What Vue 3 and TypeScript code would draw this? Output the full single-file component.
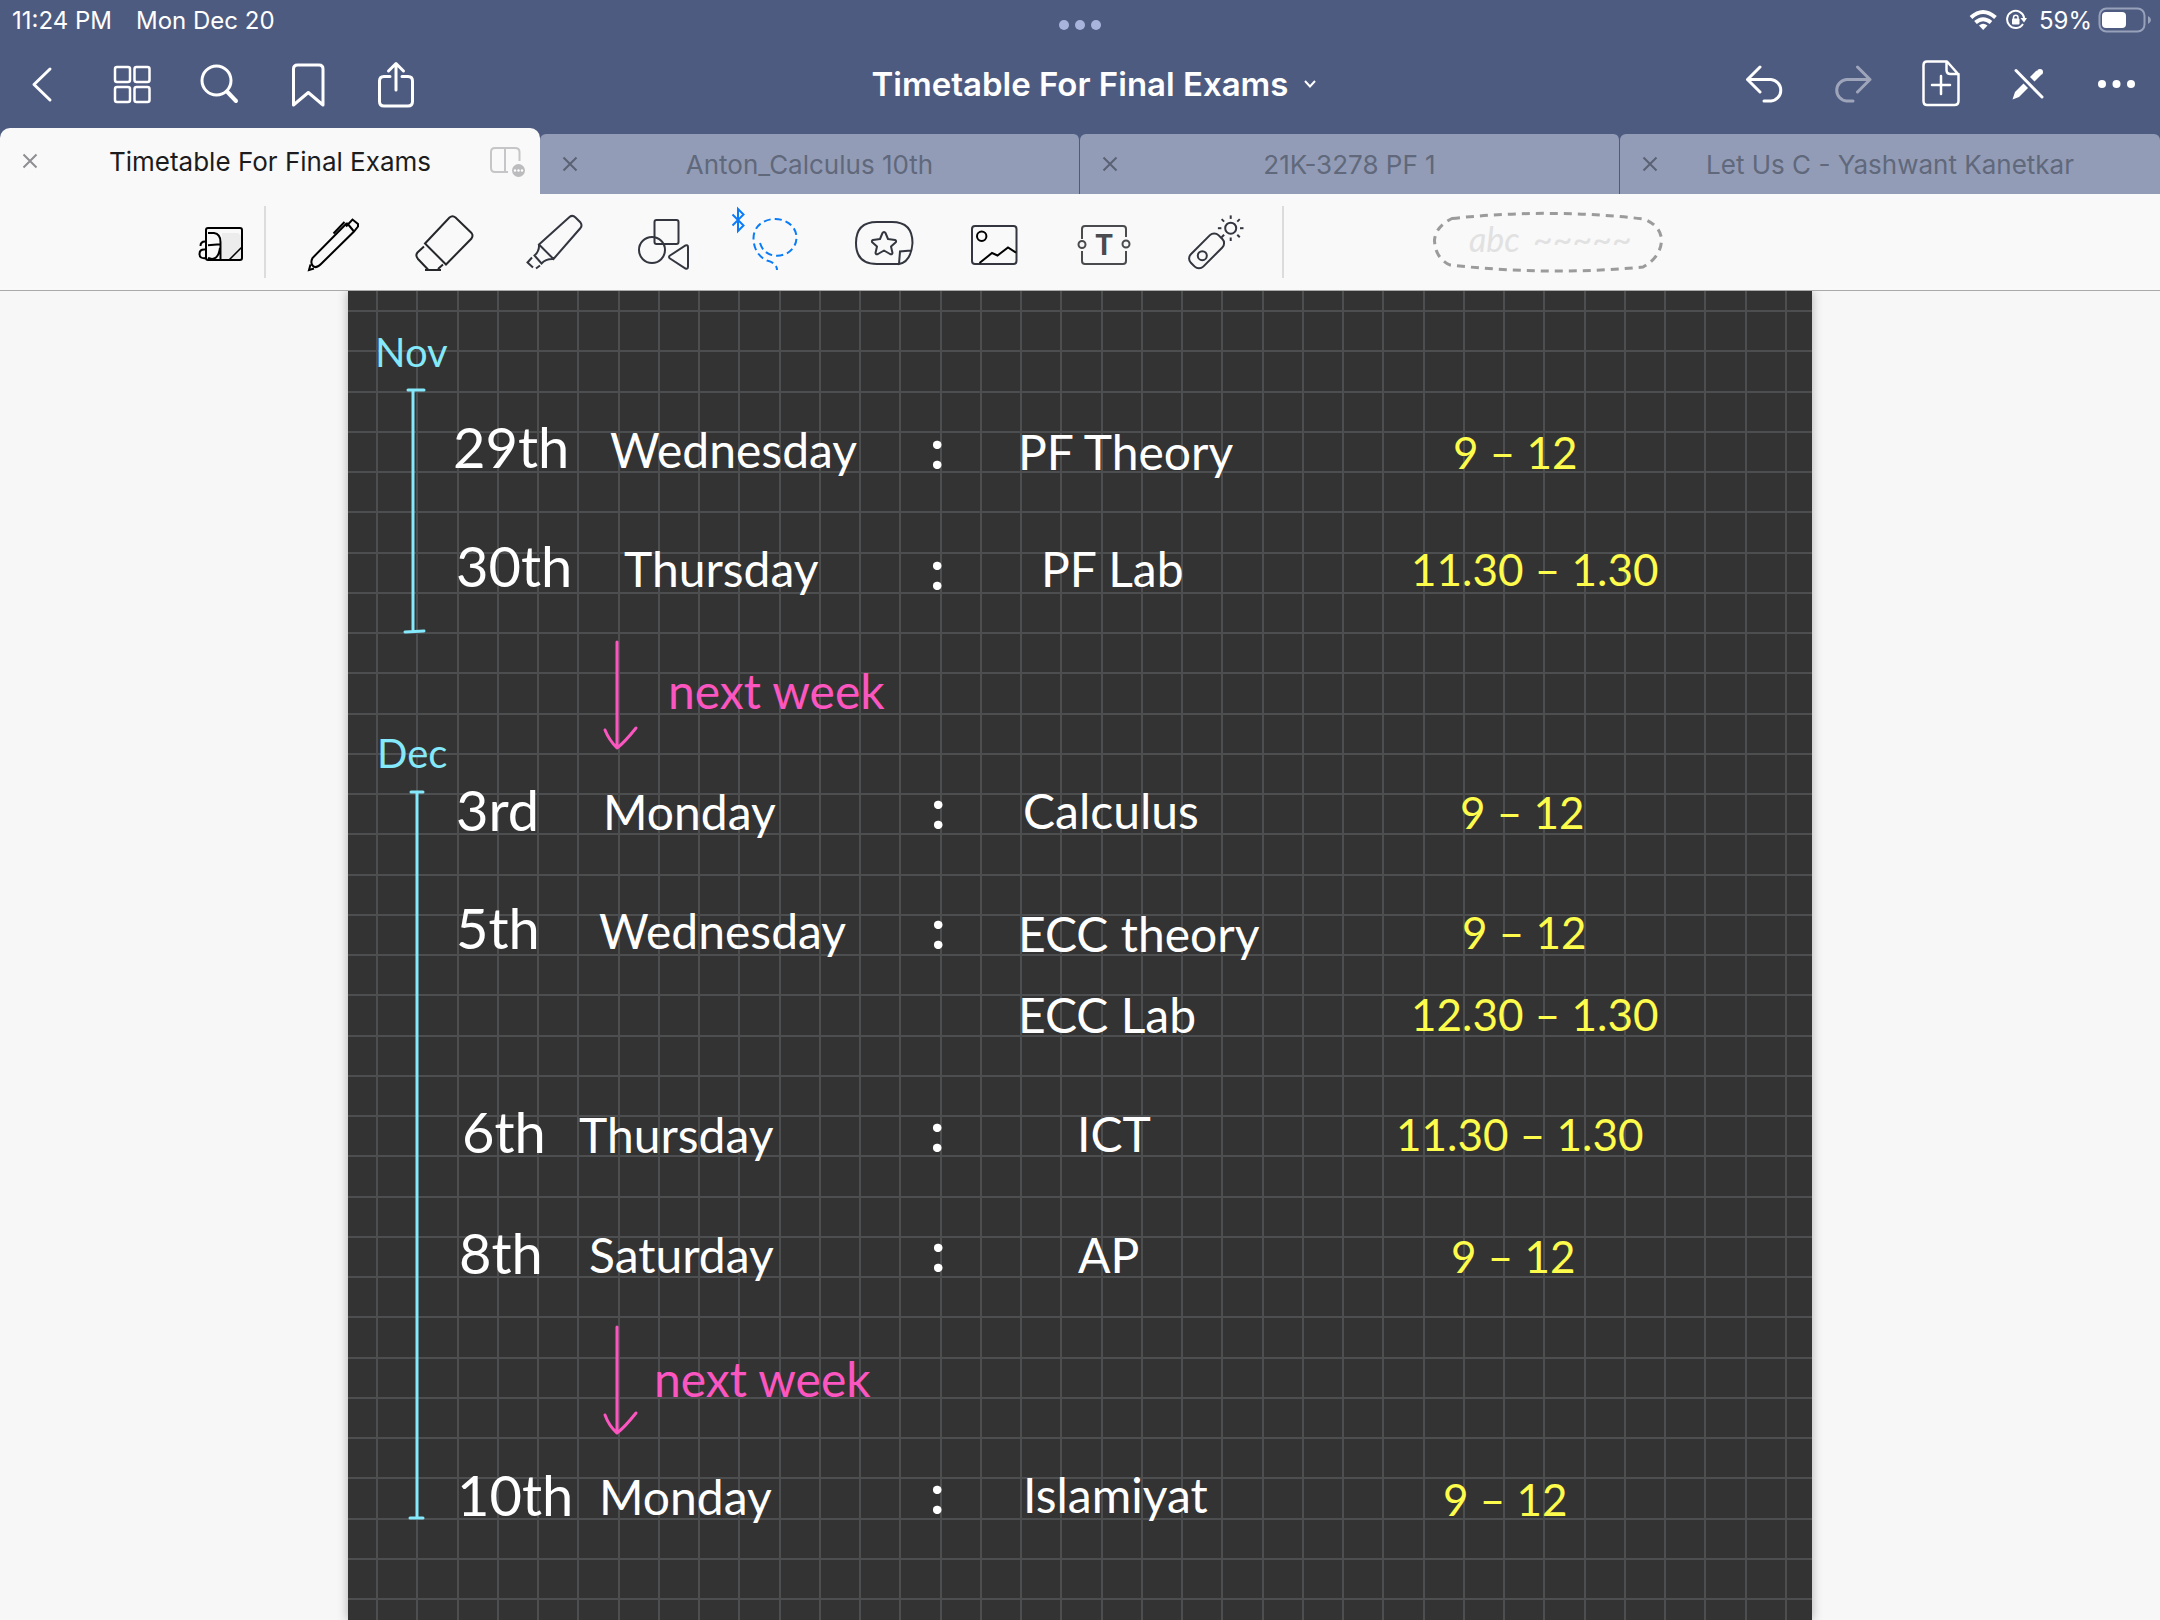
<script setup lang="ts">
interface InkNote {
  text: string
  x: number
  y: number
  kind: 'month' | 'date' | 'day' | 'colon' | 'subject' | 'time' | 'jump'
}

const tabs = [
  { title: 'Timetable For Final Exams', active: true },
  { title: 'Anton_Calculus 10th', active: false },
  { title: '21K-3278 PF 1', active: false },
  { title: 'Let Us C - Yashwant Kanetkar', active: false },
]

// Ruled squares of the paper template: 161 px for every four squares.
const ruling = (start: number, count: number) =>
  Array.from({ length: count }, (_, i) => start + Math.round((i * 161) / 4))
const columns = ruling(28, 36)
const rows = ruling(19, 33)

const notes: InkNote[] = [
  { kind: 'month', text: 'Nov', x: 27, y: 76 },
  { kind: 'month', text: 'Dec', x: 29, y: 477 },

  { kind: 'date', text: '29th', x: 105, y: 177 },
  { kind: 'day', text: 'Wednesday', x: 262, y: 177 },
  { kind: 'colon', text: ':', x: 582, y: 178 },
  { kind: 'subject', text: 'PF Theory', x: 670, y: 179 },
  { kind: 'time', text: '9 – 12', x: 1105, y: 178 },

  { kind: 'date', text: '30th', x: 108, y: 296 },
  { kind: 'day', text: 'Thursday', x: 276, y: 296 },
  { kind: 'colon', text: ':', x: 582, y: 299 },
  { kind: 'subject', text: 'PF Lab', x: 693, y: 296 },
  { kind: 'time', text: '11.30 – 1.30', x: 1063, y: 295 },

  { kind: 'jump', text: 'next week', x: 320, y: 418 },

  { kind: 'date', text: '3rd', x: 108, y: 540 },
  { kind: 'day', text: 'Monday', x: 255, y: 539 },
  { kind: 'colon', text: ':', x: 583, y: 538 },
  { kind: 'subject', text: 'Calculus', x: 675, y: 538 },
  { kind: 'time', text: '9 – 12', x: 1112, y: 538 },

  { kind: 'date', text: '5th', x: 108, y: 658 },
  { kind: 'day', text: 'Wednesday', x: 251, y: 658 },
  { kind: 'colon', text: ':', x: 583, y: 658 },
  { kind: 'subject', text: 'ECC theory', x: 670, y: 661 },
  { kind: 'time', text: '9 – 12', x: 1114, y: 658 },
  { kind: 'subject', text: 'ECC Lab', x: 670, y: 742 },
  { kind: 'time', text: '12.30 – 1.30', x: 1063, y: 740 },

  { kind: 'date', text: '6th', x: 114, y: 862 },
  { kind: 'day', text: 'Thursday', x: 231, y: 862 },
  { kind: 'colon', text: ':', x: 582, y: 861 },
  { kind: 'subject', text: 'ICT', x: 729, y: 861 },
  { kind: 'time', text: '11.30 – 1.30', x: 1048, y: 860 },

  { kind: 'date', text: '8th', x: 111, y: 983 },
  { kind: 'day', text: 'Saturday', x: 241, y: 982 },
  { kind: 'colon', text: ':', x: 583, y: 981 },
  { kind: 'subject', text: 'AP', x: 730, y: 982 },
  { kind: 'time', text: '9 – 12', x: 1103, y: 982 },

  { kind: 'jump', text: 'next week', x: 306, y: 1106 },

  { kind: 'date', text: '10th', x: 109, y: 1225 },
  { kind: 'day', text: 'Monday', x: 251, y: 1224 },
  { kind: 'colon', text: ':', x: 582, y: 1223 },
  { kind: 'subject', text: 'Islamiyat', x: 675, y: 1222 },
  { kind: 'time', text: '9 – 12', x: 1095, y: 1225 },
]

const rays = [0, 45, 90, 135, 180, 225, 270, 315]
</script>

<template>
  <div class="app">
    <header class="top">
      <div class="status">
        <span>11:24 PM</span>
        <span class="status-date">Mon Dec 20</span>
        <span class="status-right">
          <svg width="28" height="22" viewBox="1968 9 28 22" fill="none" stroke="#fff" stroke-width="4">
            <path d="M1970 17.500Q1982 6.500 1994.500 17.500" />
            <path d="M1974.500 22.500Q1982 16 1990 22.500" />
            <path d="M1978 25.500Q1982 22 1986.500 25.500L1982.200 30Z" fill="#fff" stroke="none" />
          </svg>
          <svg class="lock" width="22" height="22" viewBox="2005 9 22 22" fill="none" stroke="#fff" stroke-width="2">
            <path d="M2023 24A8.600 8.600 0 1 1 2024.200 18" />
            <path d="M2020.500 18H2027L2024 22.500Z" fill="#fff" stroke="none" />
            <rect x="2012" y="18.500" width="7.500" height="6" rx="1" fill="#fff" stroke="none" />
            <path d="M2013.500 19V17.500A2.200 2.200 0 0 1 2018 17.500V19" stroke-width="1.500" />
          </svg>
          <span>59%</span>
          <svg class="battery" width="54" height="26" viewBox="2097 7 54 26">
            <rect x="2098.500" y="8.500" width="45" height="23" rx="7" fill="none" stroke="#98a1ba" stroke-width="2" />
            <rect x="2101" y="12" width="24" height="16" rx="4" fill="#fff" />
            <path d="M2147 16Q2150 17.500 2150 20T2147 24Z" fill="#98a1ba" />
          </svg>
        </span>
      </div>

      <button class="multitask" aria-label="Multitasking">
        <i></i><i></i><i></i>
      </button>

      <nav class="nav">
        <div class="nav-group">
          <button class="nav-btn" aria-label="Back">
            <svg viewBox="0 40 88 88"><path d="M50 69L34 84.500L50 100" /></svg>
          </button>
          <button class="nav-btn" aria-label="Thumbnails">
            <svg viewBox="88 40 88 88" class="thin">
              <rect x="115" y="67" width="15" height="15" rx="2" />
              <rect x="134.500" y="67" width="15" height="15" rx="2" />
              <rect x="115" y="87" width="15" height="15" rx="2" />
              <rect x="134.500" y="87" width="15" height="15" rx="2" />
            </svg>
          </button>
          <button class="nav-btn" aria-label="Search">
            <svg viewBox="176 40 88 88">
              <circle cx="216.500" cy="80.500" r="14.500" />
              <path d="M227 91.500L236 101" stroke-width="4" />
            </svg>
          </button>
          <button class="nav-btn" aria-label="Bookmark">
            <svg viewBox="264 40 88 88">
              <path d="M293.500 105V69Q293.500 65 297.500 65H319Q323 65 323 69V105L308.300 92.500Z" />
            </svg>
          </button>
          <button class="nav-btn" aria-label="Share">
            <svg viewBox="352 40 88 88">
              <path d="M390 76.500H384Q379.500 76.500 379.500 81V101.500Q379.500 106 384 106H408Q412.500 106 412.500 101.500V81Q412.500 76.500 408 76.500H402M396 90V64M388.500 71L396 63.500L403.500 71" />
            </svg>
          </button>
        </div>
        <button class="doc-title">
          Timetable For Final Exams
          <svg width="16" height="12" viewBox="0 0 16 12"><path d="M3 3L8 8.500L13 3" /></svg>
        </button>
        <div class="nav-group right">
          <button class="nav-btn" aria-label="Undo">
            <svg viewBox="1720 40 88 88"><path d="M1760 67L1747.500 79.500L1760 92M1747.500 79.500H1771A10.800 10.800 0 0 1 1771 101H1764" /></svg>
          </button>
          <button class="nav-btn" aria-label="Redo" disabled>
            <svg viewBox="1808 40 88 88"><path d="M1857.500 67L1870 79.500L1857.500 92M1870 79.500H1846.500A10.800 10.800 0 0 0 1846.500 101H1853" /></svg>
          </button>
          <button class="nav-btn" aria-label="Add page">
            <svg viewBox="1896 40 88 88" class="page">
              <path d="M1927 61.500H1947L1958.500 74.500V101Q1958.500 105 1954.500 105H1927Q1923.500 105 1923.500 101V65Q1923.500 61.500 1927 61.500ZM1946.500 61.500V70Q1946.500 74 1950.500 74H1958.500M1932 85H1950M1941 76V94" />
            </svg>
          </button>
          <button class="nav-btn" aria-label="Read-only mode">
            <svg viewBox="1984 40 88 88">
              <path d="M2016 70.500L2042 97" />
              <path d="M2012.500 99.500L2015 92L2023.500 83.500L2028 88L2019 97Z" fill="#fff" stroke="none" />
              <path d="M2030 77L2036.500 70.500L2041 75L2034.500 81.500Z" fill="#fff" stroke="none" />
              <circle cx="2040" cy="72" r="3" fill="#fff" stroke="none" />
            </svg>
          </button>
          <button class="nav-btn" aria-label="More">
            <svg viewBox="2072 40 88 88" class="solid">
              <circle cx="2102" cy="84" r="4" /><circle cx="2116.500" cy="84" r="4" /><circle cx="2131" cy="84" r="4" />
            </svg>
          </button>
        </div>
      </nav>

      <div class="tabs">
        <div v-for="tab in tabs" :key="tab.title" class="tab" :class="{ active: tab.active }">
          <button class="tab-close" :aria-label="'Close ' + tab.title">
            <svg width="16" height="16" viewBox="0 0 16 16"><path d="M1.500 1.500L14.500 14.500M14.500 1.500L1.500 14.500" /></svg>
          </button>
          <button class="tab-title">{{ tab.title }}</button>
          <svg v-if="tab.active" class="split" width="60" height="66" viewBox="480 128 60 66">
            <path d="M508 172H495Q491 172 491 168V152Q491 148 495 148H515Q519.500 148 519.500 152V161M505 148V172" fill="none" stroke="#c6c6c8" stroke-width="2" />
            <circle cx="518.500" cy="170.500" r="6.500" fill="#bcbcbe" />
            <g fill="#fff"><circle cx="515" cy="170.500" r="1.200" /><circle cx="518.500" cy="170.500" r="1.200" /><circle cx="522" cy="170.500" r="1.200" /></g>
          </svg>
        </div>
      </div>
    </header>

    <div class="toolbar">
      <button class="tool zoom" aria-label="Zoom window">
        <svg width="84" height="96" viewBox="180 194 84 96" stroke="#000">
          <path d="M222 233H238L241 236V260H222Z" fill="#ececec" stroke="none" />
          <rect x="206" y="228" width="36" height="32" rx="2" />
          <path d="M208 233H214Q220.500 234 220.500 242V259M208 245.200L220 244.200M208 258Q218 262 220 248M205 241.500Q200.500 241.500 200.500 246M205 249.500Q199.500 249 199.500 254T206 258" />
          <path d="M229.500 259.500L241.500 247.500" stroke-width="1.500" />
        </svg>
      </button>
      <span class="rule"></span>
      <div class="tools">
        <button class="tool" aria-label="Pen">
          <svg viewBox="279 194 110 96" stroke="#000">
            <path d="M347 223L312.500 258Q310 263 313 266T321 264L354 231.500L358 226.500V224L352.500 219.500L346 226.500M347 223L354 231.500M344.500 222L333.500 233.500M310.500 264.500L309 270L314 268.500" />
          </svg>
        </button>
        <button class="tool" aria-label="Eraser">
          <svg viewBox="389 194 110 96" stroke="#26272b">
            <path d="M425 243.500L449.500 217.500Q452.500 215 455.500 217.500L471.500 233Q473.500 235.500 471.500 238.500L446 264.500ZM424 246.500L417.500 252.500Q415 255.500 418 259L428 269.500M425 270H441M438 269L443 264.500" />
          </svg>
        </button>
        <button class="tool" aria-label="Highlighter">
          <svg viewBox="499 194 110 96" stroke="#33363f">
            <path d="M539 244.500L569.500 217Q572.500 214.500 575.500 217.500L580.500 222.500Q582.500 225.500 580.500 228L553.500 259ZM539 244.500Q539.500 251 534.500 255.500L541.500 263.500Q546 258.500 553.500 259M532 257.500L527.500 262.500L533 267.500M536 268.500L540 265.500" />
          </svg>
        </button>
        <button class="tool" aria-label="Shapes">
          <svg viewBox="609 194 110 96" stroke="#33363f">
            <rect x="654.500" y="220" width="24" height="24" rx="2" />
            <circle cx="652" cy="250" r="13" />
            <path d="M670 255.500L685.500 245.500Q688 244.500 688 247V266.500Q688 269.500 685.500 268.500L670 258.500Q668 257 670 255.500Z" />
          </svg>
        </button>
        <button class="tool" aria-label="Lasso">
          <svg viewBox="719 194 110 96" stroke="#0a7cf8">
            <path d="M732.500 214.500L743.500 225.500L738 231V209L743.500 214.500L732.500 225.500" />
            <path stroke-dasharray="7 4" d="M760 243Q764 255.500 777 255.700C789 255.500 796.500 247 796.500 237.500C796.500 227 787 219 775 219C763 219 753.500 227 753.500 238C753.500 248 758 256.500 767 260.500Q777 263 777 270" />
          </svg>
        </button>
        <button class="tool" aria-label="Stickers">
          <svg viewBox="829 194 110 96" stroke="#33363f">
            <path d="M899 264H877Q856 264 856 243T877 222H892Q912.500 222 912.500 243Q911 262 899 264L900 251.500L911 250.500" />
            <path stroke-linejoin="round" d="M884 232Q885 232 885.500 233L888 239L895 240Q897 241 895.500 242.500L891 246.500L892.500 253Q892 255 890 254L884 250.500L878 254Q876 255 875.500 253L877 246.500L872.500 242.500Q871 241 873 240L880 239L882.500 233Q883 232 884 232Z" />
          </svg>
        </button>
        <button class="tool" aria-label="Image">
          <svg viewBox="939 194 110 96" stroke="#33363f">
            <rect x="972" y="226" width="44.500" height="38" rx="3" />
            <g stroke="#000"><circle cx="981.700" cy="236.300" r="4.700" /><path d="M979.500 263L992 253L997.500 255.500L1008 247.500L1016 252.700" /></g>
          </svg>
        </button>
        <button class="tool" aria-label="Text">
          <svg viewBox="1049 194 110 96" stroke="#4a4b4e">
            <path d="M1082 239V229Q1082 226 1085 226H1123Q1126 226 1126 229V237M1082 251V261Q1082 264 1085 264H1123Q1126 264 1126 261V251" />
            <circle cx="1082" cy="244.500" r="3.500" /><circle cx="1126" cy="244" r="3.500" />
            <text class="tool-letter" x="1104" y="255" text-anchor="middle">T</text>
          </svg>
        </button>
        <button class="tool" aria-label="Laser pointer">
          <svg viewBox="1159 194 110 96" stroke="#33363f">
            <g transform="rotate(-45 1206.700 250.700)"><rect x="1187" y="242" width="39" height="17.500" rx="6" /></g>
            <circle cx="1202.300" cy="255.700" r="4.500" />
            <circle cx="1230.700" cy="228.200" r="5.500" />
            <path v-for="a in rays" :key="a" d="M1240 228.200H1243.500" :transform="`rotate(${a} 1230.700 228.200)`" />
          </svg>
        </button>
      </div>
      <span class="rule"></span>
      <button class="preset" aria-label="Handwriting selection">
        <svg width="236" height="66" viewBox="1430 209 236 66">
          <path d="M1452 218.500Q1548 208 1644 219Q1661 226 1661.500 240Q1661 257 1643 267Q1548 276 1450 265Q1435 258 1434.500 240Q1436 226 1452 218.500Z" fill="none" stroke="#9b9b9b" stroke-width="3" stroke-dasharray="8 6" />
          <text class="preset-text" x="1469" y="252">abc</text>
          <text class="preset-text" x="1533" y="252">~~~~~</text>
        </svg>
      </button>
    </div>

    <main class="desk">
      <section class="paper" aria-label="Timetable For Final Exams">
        <svg class="ink" width="100%" height="1329">
          <g class="grid">
            <rect v-for="x in columns" :key="'c' + x" :x="x" y="0" width="2" height="1329" />
            <rect v-for="y in rows" :key="'r' + y" x="0" :y="y" width="100%" height="2" />
          </g>
          <g class="bracket">
            <path d="M60 99H76M65 100V340M57 341L76 340" />
            <path d="M63 501H75M69 501V1227M62 1227H75" />
          </g>
          <g class="arrow">
            <path d="M269 351V455M257 439Q261 449 269 457Q276 452 288 437" />
            <path d="M269 1036V1141M257 1124Q261 1135 269 1142Q276 1137 288 1122" />
          </g>
          <text v-for="(n, i) in notes" :key="i" :x="n.x" :y="n.y" :class="n.kind">{{ n.text }}</text>
        </svg>
      </section>
    </main>
  </div>
</template>

<style>
body {
  background: #f7f7f7;
}
</style>

<style scoped>
.app {
  display: flex;
  flex-direction: column;
  min-height: 100vh;
  font-family: Inter, 'Liberation Sans', sans-serif;
}
button {
  border: 0;
  padding: 0;
  margin: 0;
  background: none;
  color: inherit;
  font: inherit;
  display: flex;
  align-items: center;
  justify-content: center;
}
.top {
  position: relative;
  background: #4e5b81;
  color: #fff;
}
.status {
  display: flex;
  align-items: center;
  height: 40px;
  padding: 0 8px 0 12px;
  font-size: 24px;
}
.status-date {
  margin-left: 24px;
}
.status-right {
  display: flex;
  align-items: center;
  margin-left: auto;
}
.lock {
  margin: 0 12px 0 8px;
}
.battery {
  margin-left: 6px;
}
.multitask {
  position: absolute;
  top: 20px;
  left: 50%;
  transform: translateX(-50%);
  gap: 6px;
}
.multitask i {
  width: 10px;
  height: 10px;
  border-radius: 50%;
  background: #a9b4dc;
}
.nav {
  display: grid;
  grid-template-columns: 1fr auto 1fr;
  align-items: center;
  height: 88px;
}
.nav-group {
  display: flex;
}
.nav-group.right {
  justify-content: flex-end;
}
.nav-btn {
  width: 88px;
  height: 88px;
}
.nav-btn svg {
  width: 88px;
  height: 88px;
  fill: none;
  stroke: #fff;
  stroke-width: 3;
  stroke-linecap: round;
  stroke-linejoin: round;
}
.nav-btn svg.thin,
.nav-btn svg.page {
  stroke-width: 2.5;
}
.nav-btn svg.solid {
  fill: #fff;
  stroke: none;
}
.nav-btn:disabled {
  opacity: 0.45;
}
.doc-title {
  font-size: 33px;
  font-weight: 600;
  gap: 14px;
  padding-left: 30px;
}
.doc-title svg {
  fill: none;
  stroke: #fff;
  stroke-width: 2;
}
.tabs {
  display: grid;
  grid-template-columns: repeat(4, 1fr);
  align-items: end;
  height: 66px;
}
.tab {
  display: grid;
  grid-template-columns: 60px 1fr 60px;
  align-items: center;
  height: 60px;
  box-sizing: border-box;
  border-radius: 6px 6px 0 0;
  border-right: 1px solid #4e5b81;
  background: #939cb6;
  color: #60687b;
  font-size: 26px;
}
.tab:last-child {
  border-right: 0;
}
.tab.active {
  height: 66px;
  border: 0;
  border-radius: 10px 10px 0 0;
  background: #f9f9f9;
  color: #1c1c1e;
}
.tab-close {
  height: 60px;
}
.tab-close svg {
  fill: none;
  stroke: #5a6275;
  stroke-width: 2;
}
.active .tab-close svg {
  stroke: #8e8e93;
}
.tab-title {
  white-space: nowrap;
}
.toolbar {
  display: flex;
  align-items: center;
  height: 96px;
  padding-left: 180px;
  background: #f9f9f9;
  border-bottom: 1px solid #a9abaa;
}
.tools {
  display: flex;
  margin: 0 13px;
}
.tool {
  width: 110px;
  height: 96px;
}
.tool.zoom {
  width: 84px;
}
.tool svg {
  flex: none;
  height: 96px;
  fill: none;
  stroke-width: 2;
}
.tools .tool svg {
  width: 110px;
}
.tool-letter {
  font-size: 28px;
  font-weight: 700;
  fill: #4a4b4e;
  stroke: none;
}
.rule {
  width: 2px;
  height: 72px;
  background: #dcdcdc;
}
.preset {
  margin-left: 146px;
}
.preset-text {
  font-family: Lato, 'Noto Sans', sans-serif;
  font-size: 34px;
  font-style: italic;
  fill: #e1e1e1;
}
.desk {
  flex: 1;
  display: grid;
  grid-template-columns: minmax(0, 348fr) minmax(0, 1464fr) minmax(0, 348fr);
  background: #f7f7f7;
  overflow: hidden;
}
.paper {
  grid-column: 2;
  background: #333;
  box-shadow: 0 0 10px rgba(0, 0, 0, 0.3);
}
.ink {
  display: block;
}
.grid {
  fill: #4d4e50;
}
.bracket,
.arrow {
  fill: none;
  stroke-width: 3;
  stroke-linecap: round;
  stroke-linejoin: round;
}
.bracket {
  stroke: #85e9fc;
}
.arrow {
  stroke: #fb56c0;
}
.ink text {
  font-family: Lato, 'Noto Sans', sans-serif;
  font-size: 48px;
  fill: #fff;
}
.ink .date {
  font-size: 56px;
}
.ink .month {
  font-size: 40px;
  fill: #85e9fc;
}
.ink .colon {
  font-size: 56px;
  font-weight: 700;
}
.ink .time {
  font-size: 44px;
  fill: #fdfb4b;
}
.ink .jump {
  fill: #fb56c0;
}
</style>
